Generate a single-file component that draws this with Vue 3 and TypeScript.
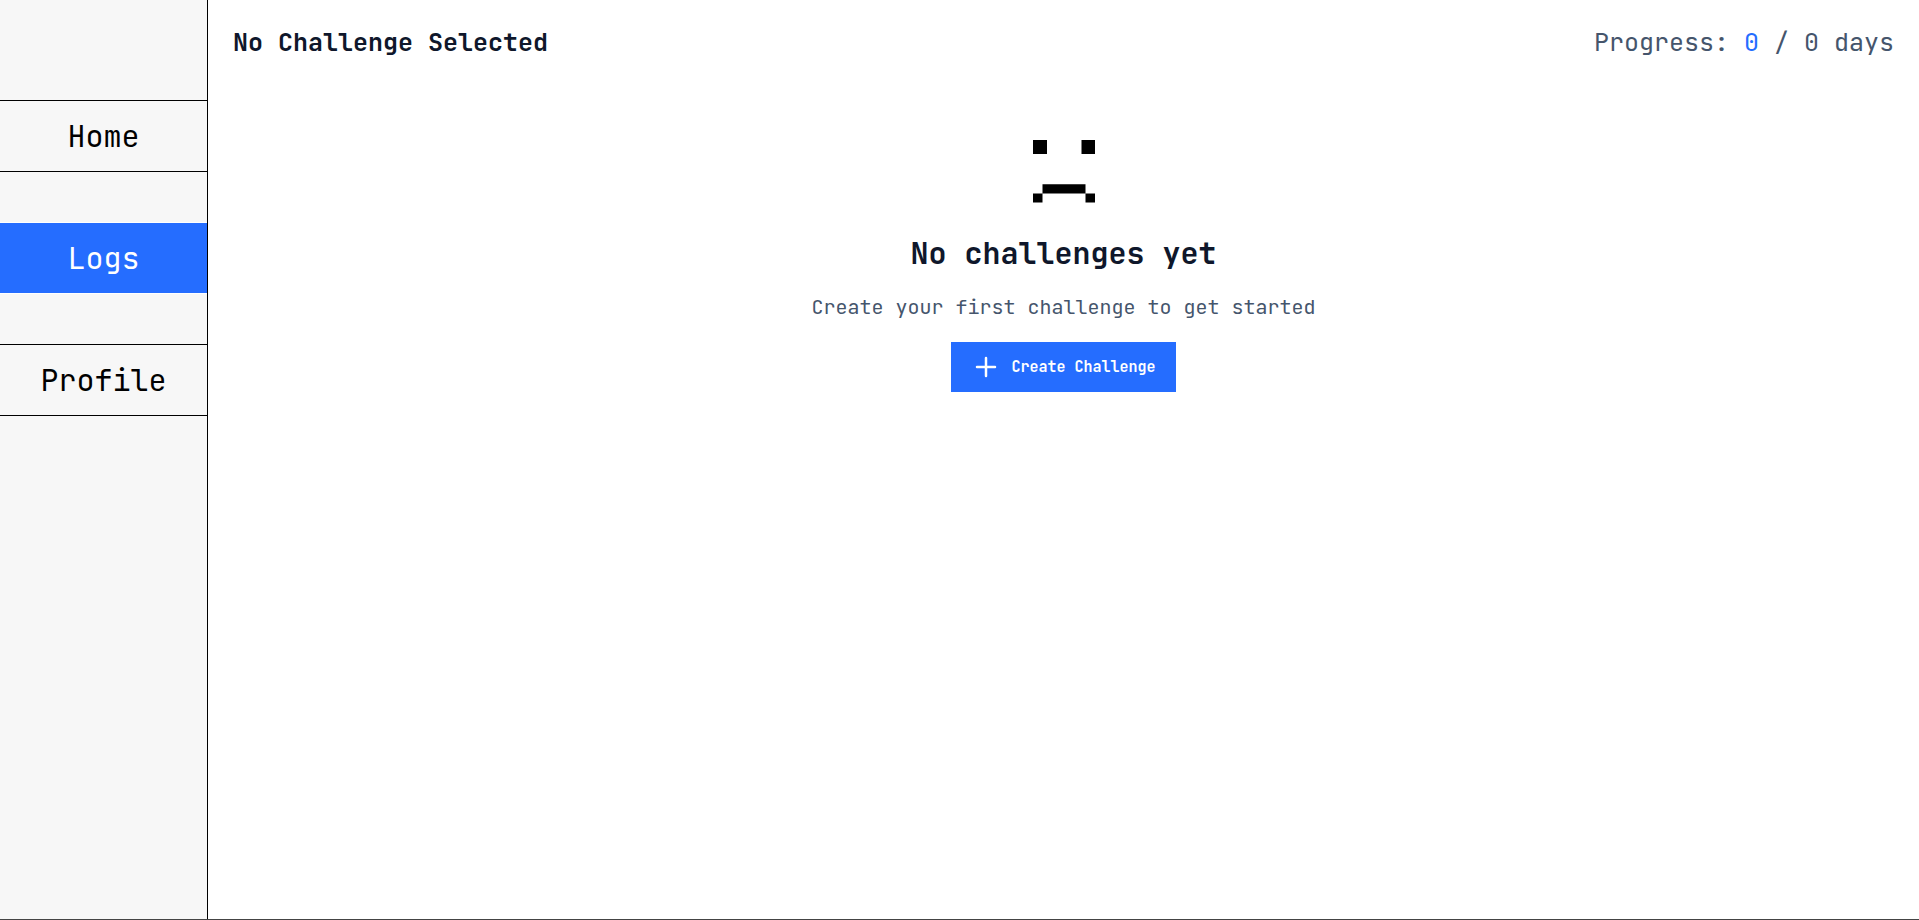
<script setup lang="ts">
import { ref } from 'vue'

interface NavItem {
  id: string
  label: string
}

const items: NavItem[] = [
  { id: 'home', label: 'Home' },
  { id: 'logs', label: 'Logs' },
  { id: 'profile', label: 'Profile' },
]
const current = ref('logs')
const done = ref(0)
const total = ref(0)
</script>

<template>
  <div class="app">
    <nav class="sidebar" aria-label="Main">
      <a
        v-for="item in items"
        :key="item.id"
        :href="'#' + item.id"
        class="nav-link"
        :class="{ active: item.id === current }"
        :aria-current="item.id === current ? 'page' : undefined"
        @click="current = item.id"
      >{{ item.label }}</a>
    </nav>
    <main class="main">
      <header class="header">
        <h1 class="title">No Challenge Selected</h1>
        <p class="progress">Progress: <span class="count">{{ done }}</span> / {{ total }} days</p>
      </header>
      <section class="empty">
        <svg class="face" viewBox="0 0 62 63" aria-hidden="true">
          <path d="M0 0h14v14H0zM48.5 0H62v14H48.5zM9.5 44.2h43v9.3H62v9H52.5v-9h-43v9H0v-9h9.5z" />
        </svg>
        <h2 class="empty-title">No challenges yet</h2>
        <p class="empty-text">Create your first challenge to get started</p>
        <button class="create" type="button">
          <svg class="plus" viewBox="0 0 30 30" aria-hidden="true">
            <path d="M15 6v18M6 15h18" />
          </svg>
          <span>Create Challenge</span>
        </button>
      </section>
    </main>
  </div>
</template>

<style>
body {
  margin: 0;
}
</style>

<style scoped>
.app {
  display: flex;
  box-sizing: border-box;
  min-height: 100vh;
  border-bottom: 1px solid #444;
  background: #fff;
  color: #000;
  font-family: "JetBrains Mono", "DejaVu Sans Mono", monospace;
}

.sidebar {
  display: flex;
  flex: none;
  flex-direction: column;
  gap: 50px;
  box-sizing: border-box;
  width: 208px;
  padding-top: 100px;
  border-right: 1px solid #000;
  background: #f7f7f7;
}

.nav-link {
  border-top: 1px solid #000;
  border-bottom: 1px solid #000;
  color: #000;
  font-size: 30px;
  line-height: 70px;
  text-align: center;
  text-decoration: none;
}

.nav-link.active {
  border-color: #fff;
  background: #256dff;
  color: #fff;
}

.main {
  flex: 1;
  min-width: 0;
}

.header {
  display: flex;
  justify-content: space-between;
  padding: 25px;
  font-size: 25px;
  line-height: 34px;
}

.title {
  margin: 0;
  color: #0f172b;
  font-size: 25px;
  font-weight: 700;
}

.progress {
  margin: 0;
  color: #45556c;
}

.count {
  color: #256dff;
}

.empty {
  display: flex;
  flex-direction: column;
  align-items: center;
  padding-top: 56px;
}

.face {
  width: 62px;
  height: 63px;
}

.empty-title {
  margin: 30px 0 0;
  color: #0f172b;
  font-size: 30px;
  font-weight: 700;
  line-height: 40px;
}

.empty-text {
  margin: 20px 0 21px;
  color: #45556c;
  font-size: 20px;
  line-height: 28px;
}

.create {
  display: flex;
  align-items: center;
  gap: 10px;
  height: 50px;
  padding: 0 20px;
  border: 0;
  background: #256dff;
  color: #fff;
  font-family: inherit;
  font-size: 15px;
  font-weight: 700;
  cursor: pointer;
}

.plus {
  width: 30px;
  height: 30px;
  fill: none;
  stroke: #fff;
  stroke-width: 2.5;
  stroke-linecap: round;
}
</style>
